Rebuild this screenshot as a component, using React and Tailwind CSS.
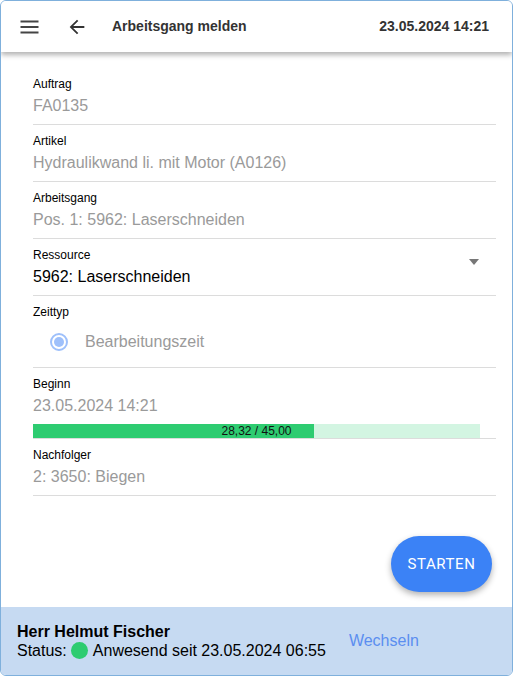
import React from "react";

const fields = [
  { label: "Auftrag", value: "FA0135" },
  { label: "Artikel", value: "Hydraulikwand li. mit Motor (A0126)" },
  { label: "Arbeitsgang", value: "Pos. 1: 5962: Laserschneiden" },
];

const Label = ({ children }) => (
  <div className="text-[12px] leading-[14px] text-black">{children}</div>
);

const Value = ({ children, dark }) => (
  <div className={"text-[16px] leading-[20px] mt-[5px] " + (dark ? "text-black" : "text-[#9a9a9a]")}>
    {children}
  </div>
);

const App = () => {
  const done = 28.32;
  const total = 45;

  return (
    <div className="h-screen w-full bg-white" style={{ fontFamily: '"Liberation Sans", Arial, sans-serif' }}>
      <div className="h-full flex flex-col border border-[#7fb0dc] rounded-[6px] overflow-hidden">
        {/* header */}
        <div className="h-[51px] shrink-0 flex items-center bg-white shadow-[0_3px_5px_rgba(0,0,0,0.3)] relative z-10">
          <svg className="ml-[19px] w-[20px] h-[20px]" viewBox="0 0 20 20">
            <rect x="0.5" y="3.5" width="18" height="2" fill="#444" />
            <rect x="0.5" y="9" width="18" height="2" fill="#444" />
            <rect x="0.5" y="14.5" width="18" height="2" fill="#444" />
          </svg>
          <svg className="ml-[26px] w-[22px] h-[22px]" viewBox="0 0 24 24">
            <path d="M20 11H7.83l5.59-5.59L12 4l-8 8 8 8 1.41-1.41L7.83 13H20v-2z" fill="#333" />
          </svg>
          <div className="ml-[24px] text-[14px] font-bold text-[#333]">Arbeitsgang melden</div>
          <div className="ml-auto mr-[23px] text-[14px] font-bold text-[#333]">23.05.2024 14:21</div>
        </div>

        {/* content */}
        <div className="flex-1 flex flex-col">
          <div className="pl-[32px] pr-[16px] pt-[16px]">
            {fields.map((f) => (
              <div key={f.label} className="pt-[9px] pb-[8px] border-b border-[#dcdcdc]">
                <Label>{f.label}</Label>
                <Value>{f.value}</Value>
              </div>
            ))}

            <div className="pt-[9px] pb-[8px] border-b border-[#dcdcdc] flex items-start">
              <div className="flex-1">
                <Label>Ressource</Label>
                <Value dark>5962: Laserschneiden</Value>
              </div>
              <div className="mt-[11px] mr-[17px] w-0 h-0 border-l-[5px] border-r-[5px] border-t-[6px] border-l-transparent border-r-transparent border-t-[#777]" />
            </div>

            <div className="pt-[9px] pb-[10px] border-b border-[#dcdcdc]">
              <Label>Zeittyp</Label>
              <div className="flex items-center h-[30px] mt-[8px]">
                <div className="ml-[17px] w-[18px] h-[18px] rounded-full border-[2px] border-[#9ec0fb] flex items-center justify-center">
                  <div className="w-[10px] h-[10px] rounded-full bg-[#9ec0fb]" />
                </div>
                <div className="ml-[17px] text-[16px] text-[#9a9a9a]">Bearbeitungszeit</div>
              </div>
            </div>

            <div className="pt-[9px] border-b border-[#dcdcdc]">
              <Label>Beginn</Label>
              <Value>23.05.2024 14:21</Value>
              <div className="mt-[8px] mr-[16px] h-[14px] bg-[#d3f5e2] relative">
                <div className="h-full bg-[#2ecc71]" style={{ width: `${(done / total) * 100}%` }} />
                <div className="absolute inset-0 flex items-center justify-center text-[12px] leading-[14px] text-[#111]">
                  28,32 / 45,00
                </div>
              </div>
            </div>

            <div className="pt-[9px] pb-[8px] border-b border-[#dcdcdc]">
              <Label>Nachfolger</Label>
              <Value>2: 3650: Biegen</Value>
            </div>
          </div>

          <div className="mt-auto flex justify-end pr-[20px] pb-[15px]">
            <button
              className="w-[101px] h-[56px] rounded-full bg-[#3b82f6] text-white text-[15px] font-normal tracking-[0.6px] shadow-[0_3px_6px_rgba(0,0,0,0.3)]"
              style={{ fontFamily: "Roboto, sans-serif" }}
            >
              STARTEN
            </button>
          </div>
        </div>

        {/* footer */}
        <div className="h-[68px] shrink-0 bg-[#c6daf2] flex items-center pl-[16px]">
          <div className="text-[16px] leading-[19px] text-black">
            <div className="font-bold">Herr Helmut Fischer</div>
            <div className="flex items-center">
              <span>Status:</span>
              <span className="ml-[4px] w-[17px] h-[17px] rounded-full bg-[#2ecc71] inline-block" />
              <span className="ml-[5px]">Anwesend seit 23.05.2024 06:55</span>
            </div>
          </div>
          <div className="ml-[23px] text-[16px] text-[#5b8ef0]">Wechseln</div>
        </div>
      </div>
    </div>
  );
};

export default App;
